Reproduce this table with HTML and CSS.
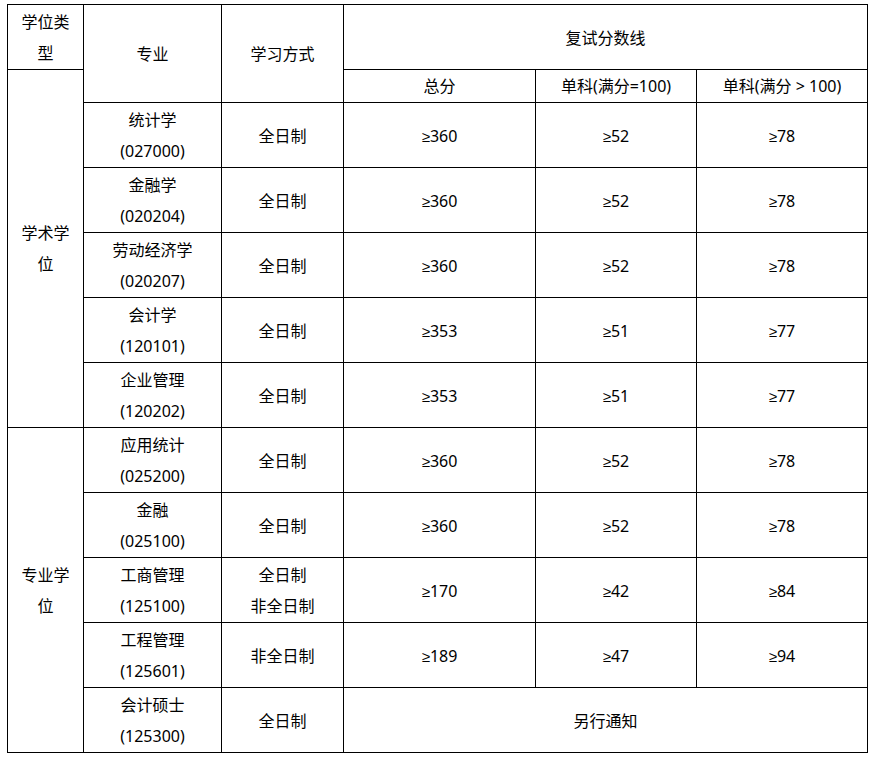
FILE: index.html
```html
<!DOCTYPE html>
<html lang="zh-CN">
<head>
<meta charset="utf-8">
<title>复试分数线</title>
<link rel="stylesheet" href="styles.css">
</head>
<body>
<table class="score-table">
  <colgroup>
    <col class="c-type">
    <col class="c-major">
    <col class="c-mode">
    <col class="c-total">
    <col class="c-s100">
    <col class="c-sgt">
  </colgroup>
  <tr>
    <td>学位类型</td>
    <td rowspan="2">专业</td>
    <td rowspan="2">学习方式</td>
    <td colspan="3">复试分数线</td>
  </tr>
  <tr class="sub">
    <td rowspan="6">学术学位</td>
    <td>总分</td>
    <td>单科(满分=100)</td>
    <td>单科(满分 &gt; 100)</td>
  </tr>
  <tr>
    <td>统计学<br>(027000)</td>
    <td>全日制</td>
    <td><span class="ge">≥</span>360</td>
    <td><span class="ge">≥</span>52</td>
    <td><span class="ge">≥</span>78</td>
  </tr>
  <tr>
    <td>金融学<br>(020204)</td>
    <td>全日制</td>
    <td><span class="ge">≥</span>360</td>
    <td><span class="ge">≥</span>52</td>
    <td><span class="ge">≥</span>78</td>
  </tr>
  <tr>
    <td>劳动经济学<br>(020207)</td>
    <td>全日制</td>
    <td><span class="ge">≥</span>360</td>
    <td><span class="ge">≥</span>52</td>
    <td><span class="ge">≥</span>78</td>
  </tr>
  <tr>
    <td>会计学<br>(120101)</td>
    <td>全日制</td>
    <td><span class="ge">≥</span>353</td>
    <td><span class="ge">≥</span>51</td>
    <td><span class="ge">≥</span>77</td>
  </tr>
  <tr>
    <td>企业管理<br>(120202)</td>
    <td>全日制</td>
    <td><span class="ge">≥</span>353</td>
    <td><span class="ge">≥</span>51</td>
    <td><span class="ge">≥</span>77</td>
  </tr>
  <tr>
    <td rowspan="5">专业学位</td>
    <td>应用统计<br>(025200)</td>
    <td>全日制</td>
    <td><span class="ge">≥</span>360</td>
    <td><span class="ge">≥</span>52</td>
    <td><span class="ge">≥</span>78</td>
  </tr>
  <tr>
    <td>金融<br>(025100)</td>
    <td>全日制</td>
    <td><span class="ge">≥</span>360</td>
    <td><span class="ge">≥</span>52</td>
    <td><span class="ge">≥</span>78</td>
  </tr>
  <tr>
    <td>工商管理<br>(125100)</td>
    <td>全日制<br>非全日制</td>
    <td><span class="ge">≥</span>170</td>
    <td><span class="ge">≥</span>42</td>
    <td><span class="ge">≥</span>84</td>
  </tr>
  <tr>
    <td>工程管理<br>(125601)</td>
    <td>非全日制</td>
    <td><span class="ge">≥</span>189</td>
    <td><span class="ge">≥</span>47</td>
    <td><span class="ge">≥</span>94</td>
  </tr>
  <tr>
    <td>会计硕士<br>(125300)</td>
    <td>全日制</td>
    <td colspan="3">另行通知</td>
  </tr>
</table>
</body>
</html>
```

FILE: styles.css
```css
html, body {
  background: #ffffff;
}
body {
  margin: 4px 0 0 7px;
  font-family: "Noto Sans", "Noto Sans CJK SC", sans-serif;
  font-size: 16px;
  color: #000000;
}
.score-table {
  border-collapse: collapse;
  table-layout: fixed;
  width: 860px;
}
.score-table td {
  border: 1px solid #000000;
  padding: 2px 7px 0;
  line-height: 31px;
  text-align: center;
  vertical-align: middle;
  white-space: normal;
}
.score-table .sub td {
  padding-top: 1px;
}
.ge {
  font-family: "Liberation Sans", "DejaVu Sans", sans-serif;
  font-size: 15px;
}
.c-type { width: 76px; }
.c-major { width: 138px; }
.c-mode { width: 122px; }
.c-total { width: 192px; }
.c-s100 { width: 161px; }
.c-sgt { width: 171px; }
```
